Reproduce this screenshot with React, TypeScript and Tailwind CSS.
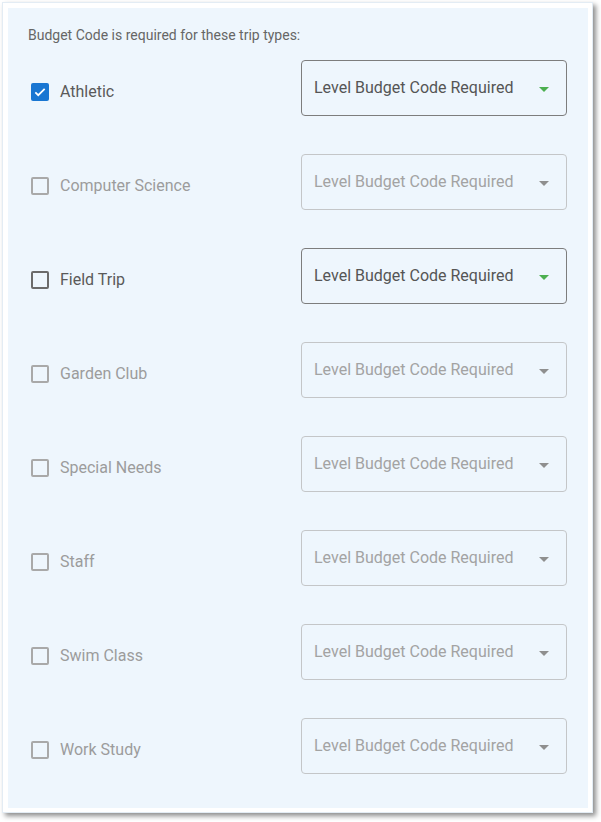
import React from "react";

type TripType = { name: string; checked: boolean; enabled: boolean };

const tripTypes: TripType[] = [
  { name: "Athletic", checked: true, enabled: true },
  { name: "Computer Science", checked: false, enabled: false },
  { name: "Field Trip", checked: false, enabled: true },
  { name: "Garden Club", checked: false, enabled: false },
  { name: "Special Needs", checked: false, enabled: false },
  { name: "Staff", checked: false, enabled: false },
  { name: "Swim Class", checked: false, enabled: false },
  { name: "Work Study", checked: false, enabled: false },
];

const Checkbox: React.FC<{ checked: boolean; enabled: boolean }> = ({ checked, enabled }) =>
  checked ? (
    <div className="w-[18px] h-[18px] rounded-[2px] bg-[#1976d2] flex items-center justify-center">
      <svg width="14" height="14" viewBox="0 0 24 24">
        <path d="M4 12.5l5 5L20 6.5" fill="none" stroke="#fff" strokeWidth="3" />
      </svg>
    </div>
  ) : (
    <div
      className={
        "w-[18px] h-[18px] rounded-[2px] border-2 " +
        (enabled ? "border-[#6b6b6b]" : "border-[#a9a9a9]")
      }
    />
  );

const Row: React.FC<{ trip: TripType }> = ({ trip }) => (
  <div className="flex items-start">
    <div className="flex items-center gap-[11px] mt-[20px] w-[270px]">
      <Checkbox checked={trip.checked} enabled={trip.enabled} />
      <span className={"text-[16px] " + (trip.enabled ? "text-[#5a5a5a]" : "text-[#9c9c9c]")}>
        {trip.name}
      </span>
    </div>
    <div
      className={
        "w-[266px] h-[56px] rounded-[4px] border flex items-center justify-between pl-[12px] pr-[17px] " +
        (trip.enabled ? "border-[#7d7d7d]" : "border-[#c4c6c8]")
      }
    >
      <span className={"text-[16px] -mt-[1px] " + (trip.enabled ? "text-[#555]" : "text-[#a3a3a3]")}>
        Level Budget Code Required
      </span>
      <svg width="10" height="5" viewBox="0 0 10 5" className="mt-[2px]">
        <path d="M0 0h10L5 5z" fill={trip.enabled ? "#4caf50" : "#8f8f8f"} />
      </svg>
    </div>
  </div>
);

export default function App() {
  return (
    <div className="w-[601px] h-[822px] bg-white pt-[2px] pl-[2px] font-['Roboto',sans-serif]">
      <div className="w-[591px] h-[811px] bg-white border border-[#e3ecf4] pt-[5px] pl-[5px] shadow-[3px_3px_5px_rgba(0,0,0,0.45)]">
        <div className="w-[580px] h-[800px] bg-[#eef6fd] pl-[23px] pt-[17px]">
          <div className="text-[14px] text-[#666] leading-[20px] -ml-[3px]">
            Budget Code is required for these trip types:
          </div>
          <div className="flex flex-col gap-[38px] mt-[15px]">
            {tripTypes.map((t) => (
              <Row key={t.name} trip={t} />
            ))}
          </div>
        </div>
      </div>
    </div>
  );
}
